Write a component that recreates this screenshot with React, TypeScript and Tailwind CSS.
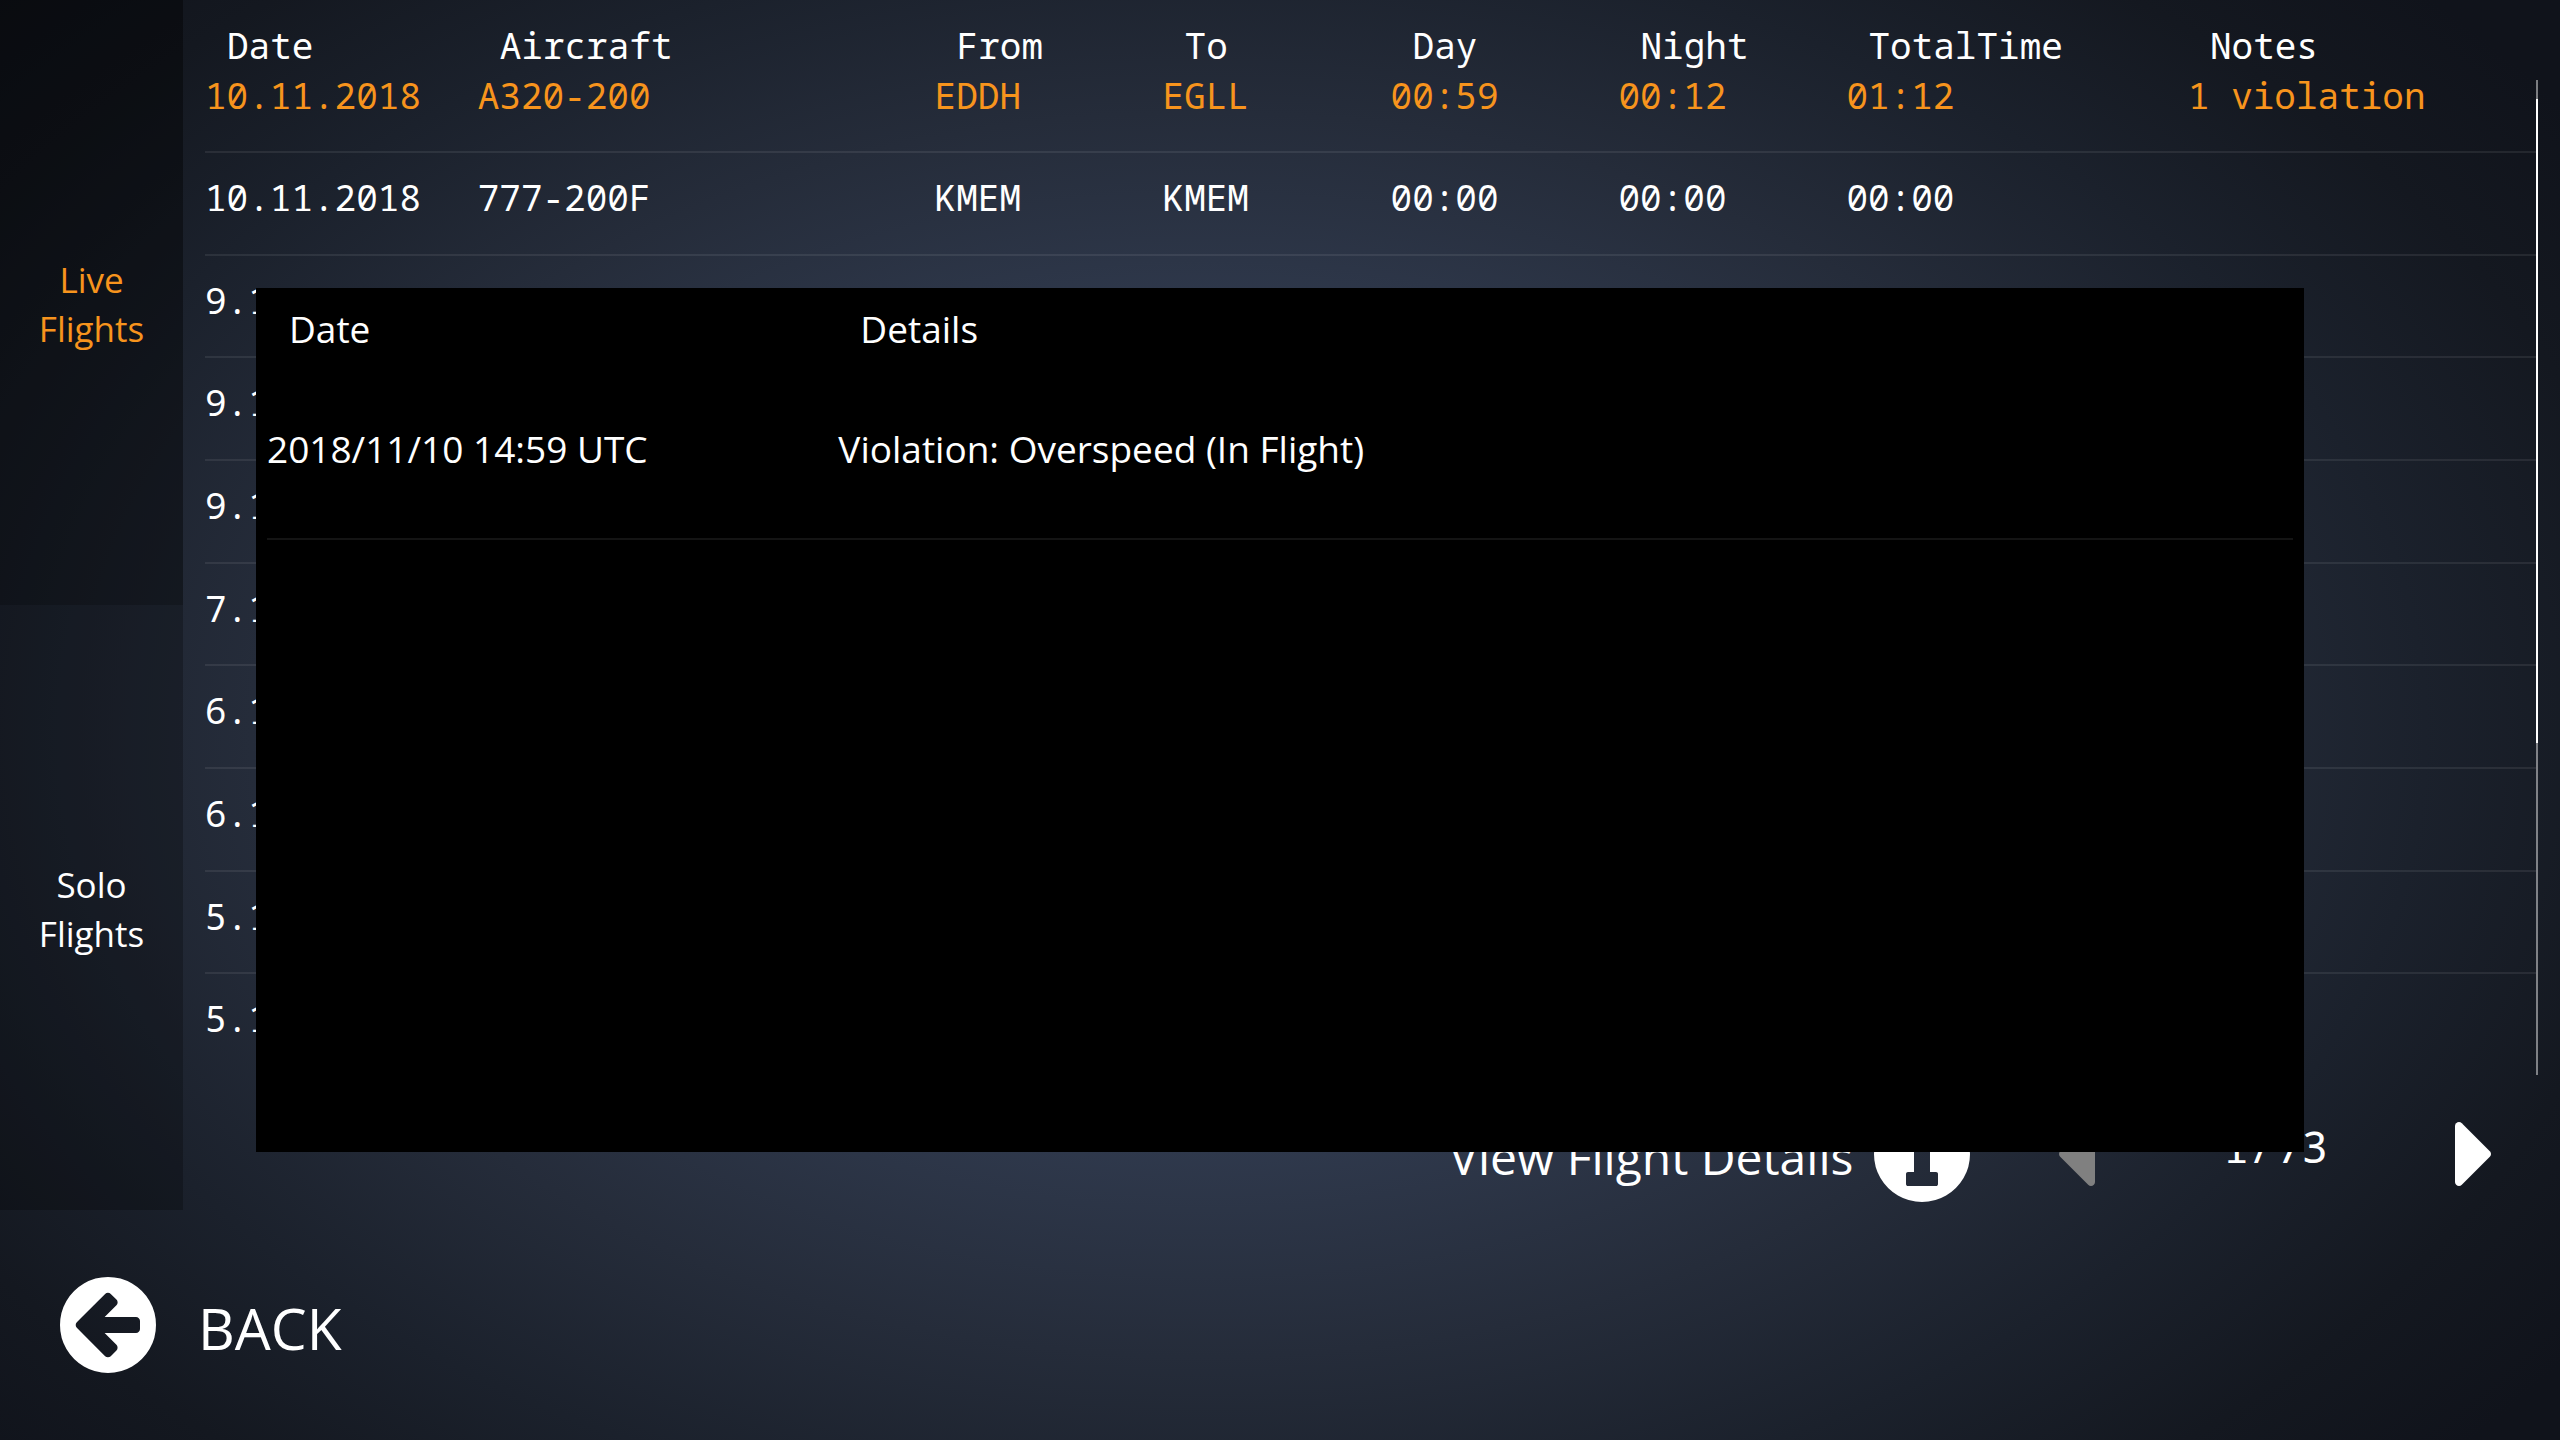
const headings = ['Date', 'Aircraft', 'From', 'To', 'Day', 'Night', 'TotalTime', 'Notes'];

const flights: string[][] = [
  ['10.11.2018', 'A320-200', 'EDDH', 'EGLL', '00:59', '00:12', '01:12', '1 violation'],
  ['10.11.2018', '777-200F', 'KMEM', 'KMEM', '00:00', '00:00', '00:00', ''],
  ['9.11.2018', '', '', '', '', '', '', ''],
  ['9.11.2018', '', '', '', '', '', '', ''],
  ['9.11.2018', '', '', '', '', '', '', ''],
  ['7.11.2018', '', '', '', '', '', '', ''],
  ['6.11.2018', '', '', '', '', '', '', ''],
  ['6.11.2018', '', '', '', '', '', '', ''],
  ['5.11.2018', '', '', '', '', '', '', ''],
  ['5.11.2018', '', '', '', '', '', '', ''],
];

function BackIcon() {
  return (
    <svg viewBox="128 128 1536 1536" className="size-24 shrink-0" fill="currentColor" aria-hidden="true">
      <path d="M1408 960v-128q0-26-19-45t-45-19h-502l189-189q19-19 19-45t-19-45l-91-91q-18-18-45-18t-45 18l-362 362-91 91q-18 18-18 45t18 45l91 91 362 362q18 18 45 18t45-18l91-91q18-18 18-45t-18-45l-189-189h502q26 0 45-19t19-45zm256-64q0 209-103 385.5t-279.5 279.5-385.5 103-385.5-103-279.5-279.5-103-385.5 103-385.5 279.5-279.5 385.5-103 385.5 103 279.5 279.5 103 385.5z" />
    </svg>
  );
}

function InfoIcon() {
  return (
    <svg viewBox="128 128 1536 1536" className="size-24 shrink-0" fill="currentColor" aria-hidden="true">
      <path d="M1152 1376v-160q0-14-9-23t-23-9h-96v-512q0-14-9-23t-23-9h-320q-14 0-23 9t-9 23v160q0 14 9 23t23 9h96v320h-96q-14 0-23 9t-9 23v160q0 14 9 23t23 9h448q14 0 23-9t9-23zm-128-896v-160q0-14-9-23t-23-9h-192q-14 0-23 9t-9 23v160q0 14 9 23t23 9h192q14 0 23-9t9-23zm640 416q0 209-103 385.5t-279.5 279.5-385.5 103-385.5-103-279.5-279.5-103-385.5 103-385.5 279.5-279.5 385.5-103 385.5 103 279.5 279.5 103 385.5z" />
    </svg>
  );
}

function Caret({ flip = false }: { flip?: boolean }) {
  return (
    <svg viewBox="576 384 576 1024" className={flip ? 'h-16 w-9 rotate-180' : 'h-16 w-9'} fill="currentColor" aria-hidden="true">
      <path d="M1152 896q0 26-19 45l-448 448q-19 19-45 19t-45-19-19-45v-896q0-26 19-45t45-19 45 19l448 448q19 19 19 45z" />
    </svg>
  );
}

function Sidebar() {
  return (
    <nav className="flex w-[183px] shrink-0 flex-col text-[35px] leading-[49px]">
      <button className="flex flex-1 flex-col items-center justify-center bg-black/40 pt-1 text-[#f7941d]">
        <span>Live</span>
        <span>Flights</span>
      </button>
      <button className="flex flex-1 flex-col items-center justify-center bg-black/25 pt-1">
        <span>Solo</span>
        <span>Flights</span>
      </button>
    </nav>
  );
}

function FlightTable() {
  return (
    <div className="flex flex-1 px-[22px]">
      <table className="h-full flex-1 table-fixed border-collapse text-left font-['Noto_Sans_Mono','DejaVu_Sans_Mono',monospace] text-[36px] leading-[49px]">
        <colgroup>
          <col className="w-[11.7%]" />
          <col className="w-[19.6%]" />
          <col className="w-[9.78%]" />
          <col className="w-[9.78%]" />
          <col className="w-[9.78%]" />
          <col className="w-[9.78%]" />
          <col className="w-[14.65%]" />
          <col />
        </colgroup>
        <thead>
          <tr>
            {headings.map((h) => (
              <th key={h} className="h-[51px] pt-[21px] pl-[22px] align-top font-normal">
                <div className="h-7">{h}</div>
              </th>
            ))}
          </tr>
        </thead>
        <tbody>
          {flights.map((row, i) => (
            <tr
              key={i}
              className={i === 0 ? 'border-b-2 border-white/8 text-[#f7941d]' : 'border-b-2 border-white/8 last:border-b-0'}
            >
              {row.map((cell, j) => (
                <td key={j} className="pb-3 align-middle whitespace-nowrap">
                  {cell}
                </td>
              ))}
            </tr>
          ))}
        </tbody>
      </table>
      <div className="mt-20 flex w-[2px] flex-col bg-white/45 pt-[19px]">
        <div className="h-[66%] bg-white" />
      </div>
    </div>
  );
}

function Pager() {
  return (
    <div className="flex h-[135px] items-center justify-end pt-6 pr-[69px]">
      <button className="flex items-center gap-[21px] text-[48px]">
        <span className="pt-1.5">View Flight Details</span>
        <InfoIcon />
      </button>
      <button className="ml-[89px] text-[#808080]" aria-label="Previous page" disabled>
        <Caret flip />
      </button>
      <span className="px-[127px] pb-4 font-['Noto_Sans_Mono','DejaVu_Sans_Mono',monospace] text-[44px]">1/73</span>
      <button aria-label="Next page">
        <Caret />
      </button>
    </div>
  );
}

function DetailsDialog() {
  return (
    <div
      role="dialog"
      aria-label="Flight details"
      className="absolute inset-x-[10%] inset-y-[20%] bg-black px-[11px] text-[37px] leading-[50px]"
    >
      <table className="w-full table-fixed border-collapse text-left">
        <colgroup>
          <col className="w-[28.2%]" />
          <col />
        </colgroup>
        <thead>
          <tr>
            <th className="pt-4 pl-[22px] font-normal">Date</th>
            <th className="pt-4 pl-[22px] font-normal">Details</th>
          </tr>
        </thead>
        <tbody>
          <tr className="border-b-2 border-white/8">
            <td className="pt-[70px] pb-[64px]">2018/11/10 14:59 UTC</td>
            <td className="pt-[70px] pb-[64px]">Violation: Overspeed (In Flight)</td>
          </tr>
        </tbody>
      </table>
    </div>
  );
}

export default function App() {
  return (
    <div className="relative flex min-h-screen flex-col bg-[radial-gradient(ellipse_62%_72%_at_47%_51%,#333f55_0%,#303a4e_38%,#252c3a_60%,#1b212c_77%,#141820_92%,#10131b_105%)] font-['Open_Sans',sans-serif] text-white">
      <main className="flex flex-1">
        <Sidebar />
        <section className="flex min-w-0 flex-1 flex-col">
          <FlightTable />
          <Pager />
        </section>
      </main>
      <footer className="flex h-[16vh] items-center pl-[60px]">
        <button className="flex items-center gap-[42px] text-[57px]">
          <BackIcon />
          <span className="pt-2">BACK</span>
        </button>
      </footer>
      <DetailsDialog />
    </div>
  );
}
